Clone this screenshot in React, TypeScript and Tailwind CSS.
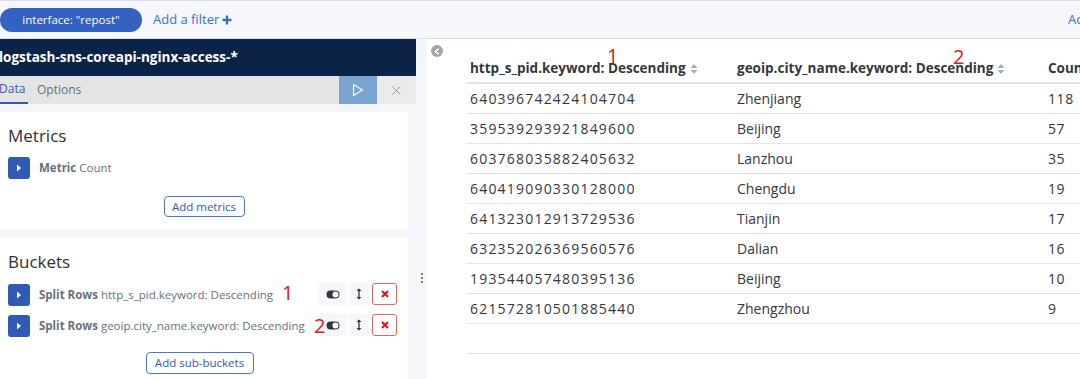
import { X } from "lucide-react";

const rows = [
  { pid: "640396742424104704", city: "Zhenjiang", count: "118" },
  { pid: "359539293921849600", city: "Beijing", count: "57" },
  { pid: "603768035882405632", city: "Lanzhou", count: "35" },
  { pid: "640419090330128000", city: "Chengdu", count: "19" },
  { pid: "641323012913729536", city: "Tianjin", count: "17" },
  { pid: "632352026369560576", city: "Dalian", count: "16" },
  { pid: "193544057480395136", city: "Beijing", count: "10" },
  { pid: "621572810501885440", city: "Zhengzhou", count: "9" },
];

const buckets = [
  { field: "http_s_pid.keyword: Descending", mark: "1" },
  { field: "geoip.city_name.keyword: Descending", mark: "2" },
];

function ExpandIcon() {
  return (
    <span className="flex h-[22px] w-[22px] shrink-0 items-center justify-center rounded-[3px] bg-[#2f5bb7]">
      <svg width="6" height="8" viewBox="0 0 6 8">
        <path d="M1 0.5 L5 4 L1 7.5 Z" fill="#fff" />
      </svg>
    </span>
  );
}

function SortIcon() {
  return (
    <svg width="8" height="12" viewBox="0 0 8 12" className="ml-[4px] inline-block">
      <path d="M4 1 L7.5 5 L0.5 5 Z" fill="#a7adb8" />
      <path d="M4 11 L7.5 7 L0.5 7 Z" fill="#a7adb8" />
    </svg>
  );
}

function Mark({ n, className }: { n: string; className: string }) {
  return (
    <span className={`absolute text-[20px] leading-none text-[#e8141b] ${className}`}>{n}</span>
  );
}

export default function App() {
  return (
    <div className="h-[379px] w-[1080px] overflow-hidden bg-white font-['Open_Sans',sans-serif] text-[#343741]">
      {/* filter bar */}
      <div className="flex h-[39px] items-center border-y border-[#d6dce8] bg-[#f5f7fa]">
        <div className="flex h-[24px] w-[142px] items-center justify-center rounded-full bg-[#3562c1] text-[11.5px] text-white">
          interface: "repost"
        </div>
        <span className="ml-[11px] flex items-center text-[13px] text-[#3a6fcf]">
          Add a filter
          <svg width="10" height="10" viewBox="0 0 10 10" className="ml-[3px]">
            <path d="M5 0.5 V9.5 M0.5 5 H9.5" stroke="#3a6fcf" strokeWidth="2.4" />
          </svg>
        </span>
        <span className="ml-auto w-[12px] overflow-hidden whitespace-nowrap text-[13px] text-[#3a6fcf]">
          Actions
        </span>
      </div>

      <div className="flex h-[340px]">
        {/* sidebar */}
        <div className="flex w-[416px] shrink-0 flex-col bg-[#f5f6fa]">
          <div className="flex h-[37px] shrink-0 items-center bg-[#0a2347] text-[13.5px] font-bold whitespace-nowrap text-white">
            <span className="-ml-[1px]">logstash-sns-coreapi-nginx-access-*</span>
          </div>
          <div className="flex h-[28px] shrink-0 items-stretch bg-[#e4e4e4] text-[12px]">
            <span className="flex w-[28px] items-center border-b-2 border-[#2f5bb7] text-[#2f5bb7]">
              <span className="-ml-[1px]">Data</span>
            </span>
            <span className="ml-[9px] flex items-center text-[#69707d]">Options</span>
            <span className="ml-auto flex w-[38px] items-center justify-center bg-[#7ba4d2]">
              <svg width="12" height="14" viewBox="0 0 12 14">
                <path d="M1.5 1.5 L10.5 7 L1.5 12.5 Z" fill="none" stroke="#fff" strokeWidth="1.2" strokeLinejoin="round" />
              </svg>
            </span>
            <span className="flex w-[39px] items-center justify-center bg-[#ebebeb] text-[#8a8f99]">
              <X size={15} strokeWidth={1.3} />
            </span>
          </div>

          <div className="flex shrink-0 flex-col gap-[8px] pt-[8px] pr-[8px]">
            {/* metrics */}
            <div className="h-[117px] shrink-0 rounded-r-[4px] bg-white pt-[12px] pl-[8px]">
              <div className="text-[17px] leading-[24px] text-[#2d2f33]">Metrics</div>
              <div className="mt-[9px] flex items-center gap-[9px] text-[11.5px] text-[#69707d]">
                <ExpandIcon />
                <span>
                  <span className="font-bold">Metric</span> Count
                </span>
              </div>
              <div className="mt-[17px] flex justify-center pr-[8px]">
                <span className="flex h-[21px] w-[81px] items-center justify-center rounded-[4px] border border-[#4a75cf] text-[11.5px] text-[#2f5bb7]">
                  Add metrics
                </span>
              </div>
            </div>

            {/* buckets */}
            <div className="h-[160px] shrink-0 rounded-r-[4px] bg-white pt-[13px] pl-[8px]">
              <div className="text-[17px] leading-[24px] text-[#2d2f33]">Buckets</div>
              <div className="mt-[9px] flex flex-col gap-[8px]">
                {buckets.map((b) => (
                  <div key={b.mark} className="relative flex h-[23px] items-center gap-[9px] text-[11.5px] text-[#69707d]">
                    <ExpandIcon />
                    <span className="whitespace-nowrap">
                      <span className="font-bold">Split Rows</span> {b.field}
                    </span>
                    <div className="absolute top-0 left-[310px] flex h-[22px] items-stretch gap-[2px]">
                      <span className="flex w-[29px] items-center justify-center rounded-l-[4px] bg-[#f5f7fa]">
                        <svg width="14" height="9" viewBox="0 0 14 9">
                          <rect x="0.5" y="0.5" width="13" height="8" rx="4" fill="#343741" />
                          <circle cx="9.5" cy="4.5" r="3" fill="#fff" />
                        </svg>
                      </span>
                      <span className="flex w-[20px] items-center justify-center bg-[#f5f7fa]">
                        <svg width="6" height="12" viewBox="0 0 6 12">
                          <path d="M3 1 V11" stroke="#343741" strokeWidth="1.3" />
                          <path d="M0.5 3 L3 0.5 L5.5 3 Z M0.5 9 L3 11.5 L5.5 9 Z" fill="#343741" />
                        </svg>
                      </span>
                      <span className="ml-[1px] flex w-[25px] items-center justify-center rounded-[3px] border border-[#e06666] bg-white">
                        <svg width="8" height="8" viewBox="0 0 8 8">
                          <path d="M1 1 L7 7 M7 1 L1 7" stroke="#d4141b" strokeWidth="2" />
                        </svg>
                      </span>
                    </div>
                    {b.mark === "1" ? (
                      <Mark n="1" className="top-[0px] left-[274px]" />
                    ) : (
                      <Mark n="2" className="top-[2px] left-[306px]" />
                    )}
                  </div>
                ))}
              </div>
              <div className="mt-[15px] flex justify-center pr-[17px]">
                <span className="flex h-[22px] w-[108px] items-center justify-center rounded-[4px] border border-[#4a75cf] text-[11.5px] text-[#2f5bb7]">
                  Add sub-buckets
                </span>
              </div>
            </div>
          </div>
        </div>

        {/* splitter */}
        <div className="flex w-[11px] shrink-0 flex-col items-center justify-center gap-[2px] bg-[#f5f6fa] pt-[138px]">
          <span className="h-[2px] w-[2px] rounded-full bg-[#555]" />
          <span className="h-[2px] w-[2px] rounded-full bg-[#555]" />
          <span className="h-[2px] w-[2px] rounded-full bg-[#555]" />
        </div>

        {/* table panel */}
        <div className="relative flex-1 overflow-hidden bg-white pt-[16px] pl-[39px]">
          <span className="absolute top-[6px] left-[4px] flex h-[12px] w-[12px] items-center justify-center rounded-full bg-[#a2a6ad]">
            <svg width="6" height="7" viewBox="0 0 6 7">
              <path d="M4.5 0.8 L1.5 3.5 L4.5 6.2" fill="none" stroke="#fff" strokeWidth="1.6" />
            </svg>
          </span>
          <Mark n="1" className="top-[7px] left-[180px]" />
          <Mark n="2" className="top-[8px] left-[526px]" />
          <div className="w-[700px] text-[14px]">
            <div className="flex h-[29px] items-center border-b-2 border-[#dfe4ec] text-[13.5px] font-bold text-[#343741]">
              <span className="flex w-[271px] items-center pl-[4px] whitespace-nowrap">
                http_s_pid.keyword: Descending
                <SortIcon />
              </span>
              <span className="flex w-[311px] items-center whitespace-nowrap">
                geoip.city_name.keyword: Descending
                <SortIcon />
              </span>
              <span className="whitespace-nowrap">Count</span>
            </div>
            {rows.map((r) => (
              <div key={r.pid} className="flex h-[30px] items-center border-b border-[#dfe4ec] text-[#343741]">
                <span className="w-[271px] pl-[4px] tracking-[1.2px]">{r.pid}</span>
                <span className="w-[311px]">{r.city}</span>
                <span className="tracking-[0.6px]">{r.count}</span>
              </div>
            ))}
            <div className="h-[30px] border-b border-[#dfe4ec]" />
          </div>
        </div>
      </div>
    </div>
  );
}
